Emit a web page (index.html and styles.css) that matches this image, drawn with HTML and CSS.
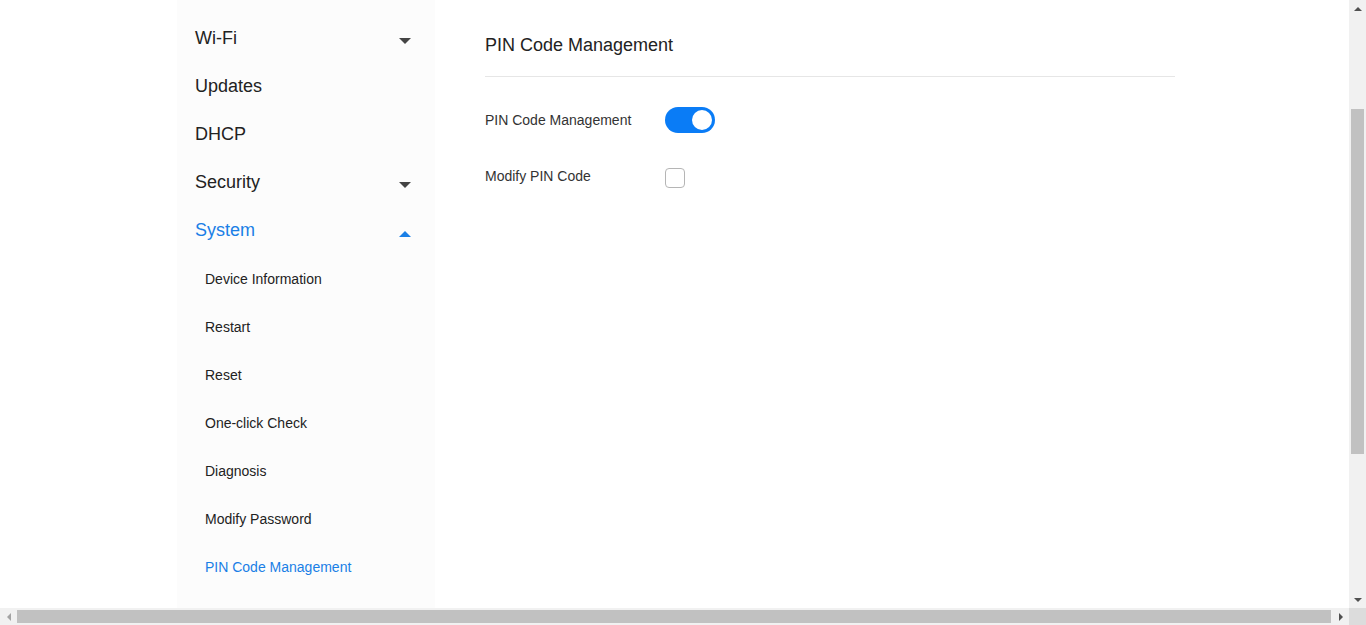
FILE: index.html
```html
<!DOCTYPE html>
<html lang="en">
<head>
  <meta charset="UTF-8" />
  <title>PIN Code Management</title>
  <link rel="stylesheet" href="styles.css">
</head>
<body>

  <div class="window">
    <div class="viewport">

      <!-- Page -->
      <div class="page">
        <div class="layout">

          <!-- Sidebar -->
          <div class="sidebar">
            <div class="menu-item">
              <span>Wi-Fi</span>
              <span class="caret down"></span>
            </div>
            <div class="menu-item"><span>Updates</span></div>
            <div class="menu-item"><span>DHCP</span></div>
            <div class="menu-item">
              <span>Security</span>
              <span class="caret down"></span>
            </div>
            <div class="menu-item active">
              <span>System</span>
              <span class="caret up"></span>
            </div>
            <div class="submenu">
              <a class="sub-item" href="#">Device Information</a>
              <a class="sub-item" href="#">Restart</a>
              <a class="sub-item" href="#">Reset</a>
              <a class="sub-item" href="#">One-click Check</a>
              <a class="sub-item" href="#">Diagnosis</a>
              <a class="sub-item" href="#">Modify Password</a>
              <a class="sub-item active" href="#">PIN Code Management</a>
            </div>
          </div>

          <!-- Main -->
          <div class="main">
            <div class="main-title">PIN Code Management</div>

            <div class="form-row">
              <label class="form-label">PIN Code Management</label>
              <span class="switch on"><span class="knob"></span></span>
            </div>

            <div class="form-row">
              <label class="form-label">Modify PIN Code</label>
              <span class="checkbox"></span>
            </div>
          </div>

        </div>
      </div>

      <!-- Vertical scrollbar -->
      <div class="vscroll">
        <div class="sb-btn"><span class="arrow arrow-up"></span></div>
        <div class="vtrack"><div class="vthumb"></div></div>
        <div class="sb-btn"><span class="arrow arrow-down"></span></div>
      </div>
    </div>

    <!-- Horizontal scrollbar -->
    <div class="hscroll">
      <div class="sb-btn"><span class="arrow arrow-left"></span></div>
      <div class="htrack"><div class="hthumb"></div></div>
      <div class="sb-btn"><span class="arrow arrow-right"></span></div>
      <div class="sb-corner"></div>
    </div>
  </div>

</body>
</html>
```

FILE: styles.css
```css
* {
  box-sizing: border-box;
}

body {
  margin: 0;
  font-family: 'Liberation Sans', Arial, sans-serif;
  background-color: #ffffff;
  overflow: hidden;
}

.window {
  width: 1366px;
  height: 625px;
  display: flex;
  flex-direction: column;
}

.viewport {
  flex: 1;
  display: flex;
  min-height: 0;
}

.page {
  flex: 1;
  overflow: hidden;
  background-color: #ffffff;
}

.layout {
  display: flex;
  padding-left: 177px;
  height: 100%;
}

/* Sidebar */
.sidebar {
  width: 258px;
  flex-shrink: 0;
  background-color: #fcfcfc;
  padding: 14px 24px 0 18px;
}

.menu-item {
  display: flex;
  align-items: center;
  justify-content: space-between;
  height: 48px;
  font-size: 18px;
  color: #222;
  cursor: pointer;
}

.menu-item.active {
  color: #1a7fe6;
}

.caret {
  width: 0;
  height: 0;
  border-left: 6px solid transparent;
  border-right: 6px solid transparent;
}

.caret.down {
  border-top: 6px solid #444;
  margin-top: 5px;
}

.caret.up {
  border-bottom: 6px solid #1a7fe6;
  margin-top: 7px;
}

.submenu {
  padding-top: 1px;
}

.sub-item {
  display: block;
  height: 48px;
  line-height: 48px;
  padding-left: 10px;
  font-size: 14px;
  color: #222;
  text-decoration: none;
}

.sub-item.active {
  color: #1a7fe6;
}

/* Main */
.main {
  width: 690px;
  margin-left: 50px;
  padding-top: 25px;
}

.main-title {
  height: 52px;
  line-height: 40px;
  font-size: 18px;
  color: #222;
  border-bottom: 1px solid #e6e6e6;
  margin-bottom: 15px;
}

.form-row {
  display: flex;
  align-items: center;
  height: 56px;
}

.form-label {
  width: 180px;
  font-size: 14px;
  color: #333;
}

.switch {
  position: relative;
  width: 50px;
  height: 26px;
  border-radius: 13px;
  background-color: #0a7cf6;
}

.switch .knob {
  position: absolute;
  top: 3px;
  right: 3px;
  width: 20px;
  height: 20px;
  border-radius: 50%;
  background-color: #ffffff;
}

.checkbox {
  width: 20px;
  height: 20px;
  margin-top: 4px;
  border: 1px solid #b5b5b5;
  border-radius: 4px;
  background-color: #ffffff;
}

/* Scrollbars */
.vscroll {
  width: 17px;
  flex-shrink: 0;
  background-color: #f1f1f1;
  display: flex;
  flex-direction: column;
}

.vtrack {
  flex: 1;
  padding: 0 2px;
}

.vthumb {
  margin-top: 92px;
  height: 345px;
  background-color: #c1c1c1;
}

.hscroll {
  height: 17px;
  flex-shrink: 0;
  background-color: #f1f1f1;
  display: flex;
}

.htrack {
  flex: 1;
  padding: 2px 1px 2px 0;
}

.hthumb {
  height: 100%;
  background-color: #c1c1c1;
}

.sb-btn {
  width: 17px;
  height: 17px;
  flex-shrink: 0;
  display: flex;
  align-items: center;
  justify-content: center;
}

.sb-corner {
  width: 17px;
  height: 17px;
  background-color: #dcdcdc;
}

.arrow {
  width: 0;
  height: 0;
}

.arrow-up {
  border-left: 4px solid transparent;
  border-right: 4px solid transparent;
  border-bottom: 4px solid #505050;
}

.arrow-down {
  border-left: 4px solid transparent;
  border-right: 4px solid transparent;
  border-top: 4px solid #505050;
}

.arrow-left {
  border-top: 4px solid transparent;
  border-bottom: 4px solid transparent;
  border-right: 4px solid #a3a3a3;
}

.arrow-right {
  border-top: 4px solid transparent;
  border-bottom: 4px solid transparent;
  border-left: 4px solid #505050;
}
```
